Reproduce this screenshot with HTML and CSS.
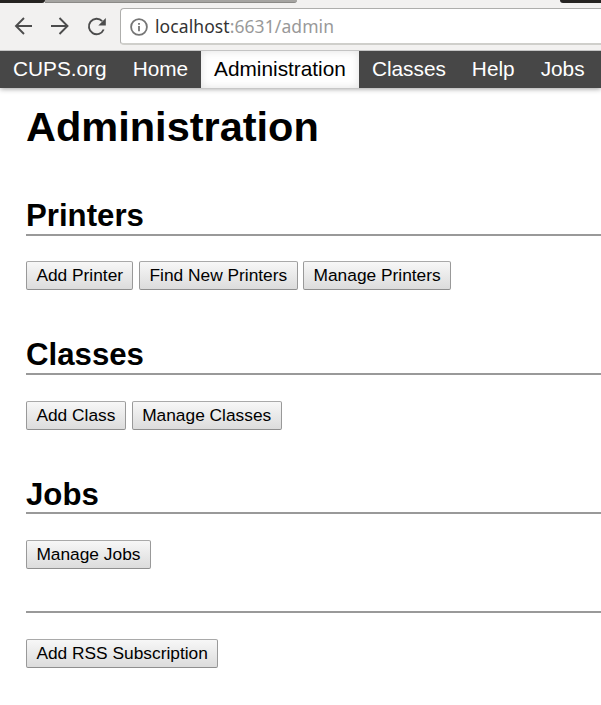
FILE: index.html
```html
<!DOCTYPE html>
<html lang="en">
<head>
<meta charset="utf-8">
<title>Administration - CUPS</title>
<link rel="stylesheet" href="styles.css">
</head>
<body>
<header class="browser">
  <div class="tabs"><span class="tab-dark"></span><span class="tab-grey"></span><span class="tab-gap"></span><span class="tab-end"></span></div>
  <div class="toolbar">
    <svg class="tools" width="120" height="36" viewBox="0 0 120 36" fill="none" stroke="#4c4c4c" stroke-width="1.9">
      <path d="M32 17H16.500M24 9L16 17L24 25"/>
      <path d="M51 17H66.500M59.500 9L67.500 17L59.500 25"/>
      <path d="M103.700 20.500A7.700 7.700 0 1 1 102.200 12.200"/>
      <path d="M105.800 9V16.500H98.300Z" fill="#4c4c4c" stroke="none"/>
    </svg>
    <div class="address">
      <svg class="info" width="18" height="18" viewBox="0 0 18 18" fill="none" stroke="#757575" stroke-width="1.8">
        <circle cx="9" cy="9" r="7.900"/><path d="M9 8V13.300M9 4.900V6.700"/>
      </svg>
      <span class="url">localhost<span class="path">:6631/admin</span></span>
    </div>
  </div>
</header>
<nav class="nav">
  <a>CUPS.org</a><a>Home</a><a class="active">Administration</a><a>Classes</a><a>Help</a><a>Jobs</a>
</nav>
<main class="content">
  <h1>Administration</h1>
  <section class="printers">
    <h2>Printers</h2>
    <div class="actions"><button>Add Printer</button><button>Find New Printers</button><button>Manage Printers</button></div>
  </section>
  <section class="classes">
    <h2>Classes</h2>
    <div class="actions"><button>Add Class</button><button>Manage Classes</button></div>
  </section>
  <section class="jobs">
    <h2>Jobs</h2>
    <div class="actions"><button>Manage Jobs</button></div>
  </section>
  <section class="rss">
    <div class="actions"><button>Add RSS Subscription</button></div>
  </section>
</main>
</body>
</html>
```

FILE: styles.css
```css
* { box-sizing: border-box; }
body {
  margin: 0;
  height: 705px;
  overflow: hidden;
  background: #fff;
  color: #000;
  font-family: "Liberation Sans", Arial, sans-serif;
  font-size: 20.8px;
}
.browser { position: relative; z-index: 1; height: 51px; background: #f2f1f0; border-bottom: 1px solid #c4c4c4; }
.tabs { display: flex; height: 3px; }
.tab-dark { width: 45px; background: #252321; border-bottom-right-radius: 3px; }
.tab-grey { width: 252px; background: #a5a4a1; border-bottom: 1px solid #8b8a87; border-bottom-right-radius: 3px; }
.tab-gap { flex: 1; }
.tab-end { width: 41px; background: #252321; border-bottom-left-radius: 3px; }
.toolbar { display: flex; height: 47px; padding-top: 5px; }
.tools { flex: none; margin-top: 1px; }
.address {
  display: flex;
  flex: 1;
  align-items: center;
  height: 37px;
  padding-left: 9px;
  background: #fff;
  border: 1px solid #aeaeac;
  border-right: 0;
  border-bottom: 2px solid #cfcfcb;
  border-radius: 4px 0 0 4px;
}
.info { flex: none; margin-top: 1px; }
.url {
  margin-left: 7px;
  color: #333;
  font-family: "Noto Sans", "Open Sans", sans-serif;
  font-size: 17.5px;
  letter-spacing: .08px;
  line-height: 24px;
  white-space: nowrap;
}
.path { color: #999; }
.nav {
  display: flex;
  height: 37px;
  background: #474747;
  box-shadow: 0 1px 5px rgba(0, 0, 0, .38);
}
.nav a { padding: 0 13px; color: #fff; line-height: 36px; }
.nav .active { background: #fff; color: #000; box-shadow: inset 0 0 9px rgba(0, 0, 0, .12); }
.content { padding-left: 26px; }
h1 { margin: 15px 0 0; font-size: 41.5px; line-height: 48px; }
h2 { margin: 0; font-size: 31.2px; line-height: 36px; height: 38px; border-bottom: 2px solid #999; }
.printers { margin-top: 47px; }
.classes { margin-top: 47px; }
.jobs { margin-top: 46px; }
.jobs h2 { line-height: 38px; }
.rss { margin-top: 42px; border-top: 2px solid #999; }
.actions { display: flex; gap: 5.6px; padding-top: 26px; }
.printers .actions { padding-top: 25px; }
.classes .actions { gap: 6px; }
button {
  height: 29px;
  padding: 0 9.4px 1px;
  border: 1px solid #999;
  border-color: #a9a9a9 #999 #8f8f8f;
  border-radius: 2px;
  background: linear-gradient(#f7f7f7, #dcdcdc);
  color: #000;
  font: 17.333px "Liberation Sans", Arial, sans-serif;
  white-space: nowrap;
}
```
